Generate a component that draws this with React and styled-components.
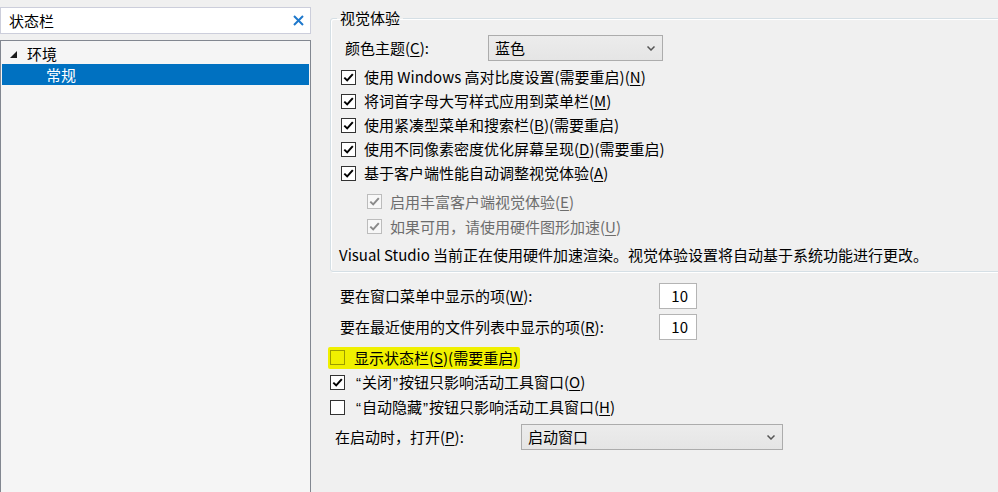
import React from 'react';
import styled, { createGlobalStyle } from 'styled-components';

const Global = createGlobalStyle`
  html, body { margin: 0; padding: 0; background: #f0f0f0; overflow: hidden; }
  body {
    font-family: "Noto Sans CJK SC", "Noto Sans", sans-serif;
    font-size: 15px;
    color: #000;
  }
  u { text-underline-offset: 2px; text-decoration-thickness: 1px; }
`;

const Page = styled.div`
  display: flex;
  gap: 19px;
  width: 1010px;
  height: 492px;
`;

/* ---------- left pane ---------- */
const LeftPane = styled.div`
  width: 311px;
  flex: none;
  display: flex;
  flex-direction: column;
  gap: 6px;
  padding-top: 7px;
  box-sizing: border-box;
`;

const SearchBox = styled.div`
  height: 27px;
  box-sizing: border-box;
  border: 1px solid #cccedb;
  background: #fff;
  display: flex;
  align-items: center;
  justify-content: space-between;
  padding: 0 6px 0 8px;
  line-height: 20px;
`;

const ClearIcon = () => (
  <svg width="11" height="11" viewBox="0 0 11 11">
    <path d="M1 1 L10 10 M10 1 L1 10" stroke="#1e78cc" strokeWidth="2" fill="none" />
  </svg>
);

const Tree = styled.div`
  flex: 1;
  border: 1px solid #828790;
  border-bottom: none;
  background: #f5f5f5;
  padding: 2px 1px;
  margin-bottom: -10px;
`;

const TreeRow = styled.div`
  height: 21px;
  display: flex;
  align-items: center;
  line-height: 20px;
  padding-left: ${p => p.$indent}px;
  background: ${p => (p.$selected ? '#0071c1' : 'transparent')};
  color: ${p => (p.$selected ? '#fff' : '#000')};
`;

const Expander = styled.span`
  display: inline-flex;
  width: 7px;
  height: 7px;
  margin-right: 10px;
  margin-top: 1px;
`;

/* ---------- right pane ---------- */
const RightPane = styled.div`
  width: 680px;
  flex: none;
  display: flex;
  flex-direction: column;
`;

const Group = styled.fieldset`
  margin: 8px 0 0 0;
  padding: 0 0 4px 0;
  min-width: 0;
  border: 1px solid #d5dfe5;
  border-radius: 3px;
  box-shadow: inset 1px 1px 0 #fff, 1px 1px 0 #fff;
`;

const Legend = styled.legend`
  margin-left: 6px;
  padding: 0 3px;
  line-height: 20px;
`;

const GroupBody = styled.div`
  display: flex;
  flex-direction: column;
  padding: 7px 0 0 10px;
`;

const FieldRow = styled.div`
  display: flex;
  align-items: center;
  height: 26px;
  line-height: 20px;
  margin-top: ${p => p.$mt || 0}px;
  padding-left: ${p => p.$pl || 0}px;
`;

const FieldLabel = styled.span`
  width: ${p => p.$w}px;
  flex: none;
`;

const Select = styled.div`
  width: ${p => p.$w}px;
  height: 26px;
  box-sizing: border-box;
  border: 1px solid #acacac;
  background: linear-gradient(#ececec, #e5e5e5);
  display: flex;
  align-items: center;
  justify-content: space-between;
  padding: 0 7px 0 6px;
  line-height: 20px;
`;

const Chevron = () => (
  <svg width="8" height="5" viewBox="0 0 8 5">
    <path d="M0.5 0.5 L4 4 L7.5 0.5" stroke="#555" strokeWidth="1.5" fill="none" />
  </svg>
);

const NumberBox = styled.div`
  width: 38px;
  height: 26px;
  box-sizing: border-box;
  border: 1px solid #b4b4b4;
  background: #fff;
  display: flex;
  align-items: center;
  justify-content: flex-end;
  padding-right: 8px;
  line-height: 20px;
`;

const CheckList = styled.div`
  display: flex;
  flex-direction: column;
  margin-top: ${p => p.$mt || 0}px;
  padding-left: ${p => p.$pl || 0}px;
`;

const CheckRow = styled.label`
  display: flex;
  align-items: center;
  height: ${p => p.$h || 24}px;
  line-height: 20px;
  gap: ${p => p.$gap || 8}px;
  color: ${p => (p.$disabled ? '#6d6d6d' : '#000')};
`;

const Highlight = styled.span`
  display: inline-flex;
  align-items: center;
  gap: 9px;
  background: #f0f000;
  margin-left: -2px;
  padding: 1px 2px 1px 2px;
  border-radius: 2px;
`;

const Quote = styled.span`
  font-family: "Liberation Sans", sans-serif;
  margin: 0 1px;
`;

const Box = styled.span`
  width: 15px;
  height: 15px;
  box-sizing: border-box;
  flex: none;
  display: inline-flex;
  align-items: center;
  justify-content: center;
  border: 1px solid ${p => (p.$disabled ? '#bcbcbc' : p.$hl ? 'rgba(0,0,0,0.35)' : '#333')};
  background: ${p => (p.$disabled ? '#f7f7f7' : p.$hl ? 'transparent' : '#fff')};
`;

const CheckBox = ({ checked, disabled, hl }) => (
  <Box $disabled={disabled} $hl={hl}>
    {checked && (
      <svg width="11" height="11" viewBox="0 0 11 11">
        <path
          d="M1.3 5.6 L4.2 8.4 L9.8 2.2"
          stroke={disabled ? '#8a8a8a' : '#000'}
          strokeWidth="2"
          fill="none"
        />
      </svg>
    )}
  </Box>
);

const InfoText = styled.div`
  height: 24px;
  line-height: 24px;
  margin-top: 4px;
  margin-left: -2px;
  white-space: nowrap;
`;

const Check = ({ checked, disabled, children, h, gap }) => (
  <CheckRow $disabled={disabled} $h={h} $gap={gap}>
    <CheckBox checked={checked} disabled={disabled} />
    <span>{children}</span>
  </CheckRow>
);

export default function App() {
  return (
    <>
      <Global />
      <Page>
        <LeftPane>
          <SearchBox>
            <span>状态栏</span>
            <ClearIcon />
          </SearchBox>
          <Tree>
            <TreeRow $indent={8}>
              <Expander>
                <svg width="7" height="7" viewBox="0 0 7 7">
                  <polygon points="7,0 7,7 0,7" fill="#1a1a1a" />
                </svg>
              </Expander>
              <span>环境</span>
            </TreeRow>
            <TreeRow $indent={44} $selected>
              <span>常规</span>
            </TreeRow>
          </Tree>
        </LeftPane>

        <RightPane>
          <Group>
            <Legend>视觉体验</Legend>
            <GroupBody>
              <FieldRow $pl={4}>
                <FieldLabel $w={143}>
                  颜色主题(<u>C</u>):
                </FieldLabel>
                <Select $w={175}>
                  <span>蓝色</span>
                  <Chevron />
                </Select>
              </FieldRow>
              <CheckList $mt={4}>
                <Check checked>
                  使用 Windows 高对比度设置(需要重启)(<u>N</u>)
                </Check>
                <Check checked>
                  将词首字母大写样式应用到菜单栏(<u>M</u>)
                </Check>
                <Check checked>
                  使用紧凑型菜单和搜索栏(<u>B</u>)(需要重启)
                </Check>
                <Check checked>
                  使用不同像素密度优化屏幕呈现(<u>D</u>)(需要重启)
                </Check>
                <Check checked>
                  基于客户端性能自动调整视觉体验(<u>A</u>)
                </Check>
              </CheckList>
              <CheckList $mt={4} $pl={26}>
                <Check checked disabled h={25}>
                  启用丰富客户端视觉体验(<u>E</u>)
                </Check>
                <Check checked disabled h={25}>
                  如果可用，请使用硬件图形加速(<u>U</u>)
                </Check>
              </CheckList>
              <InfoText>
                Visual Studio 当前正在使用硬件加速渲染。视觉体验设置将自动基于系统功能进行更改。
              </InfoText>
            </GroupBody>
          </Group>

          <FieldRow $mt={11} $pl={10}>
            <FieldLabel $w={319}>
              要在窗口菜单中显示的项(<u>W</u>):
            </FieldLabel>
            <NumberBox>10</NumberBox>
          </FieldRow>
          <FieldRow $mt={5} $pl={10}>
            <FieldLabel $w={319}>
              要在最近使用的文件列表中显示的项(<u>R</u>):
            </FieldLabel>
            <NumberBox>10</NumberBox>
          </FieldRow>

          <CheckList $mt={5}>
            <CheckRow $h={25}>
              <Highlight>
                <CheckBox hl />
                <span>
                  显示状态栏(<u>S</u>)(需要重启)
                </span>
              </Highlight>
            </CheckRow>
            <Check checked h={25} gap={10}>
              <Quote>“</Quote>关闭<Quote>”</Quote>按钮只影响活动工具窗口(<u>O</u>)
            </Check>
            <Check h={25} gap={10}>
              <Quote>“</Quote>自动隐藏<Quote>”</Quote>按钮只影响活动工具窗口(<u>H</u>)
            </Check>
          </CheckList>

          <FieldRow $mt={4} $pl={5}>
            <FieldLabel $w={186}>
              在启动时，打开(<u>P</u>):
            </FieldLabel>
            <Select $w={262}>
              <span>启动窗口</span>
              <Chevron />
            </Select>
          </FieldRow>
        </RightPane>
      </Page>
    </>
  );
}
